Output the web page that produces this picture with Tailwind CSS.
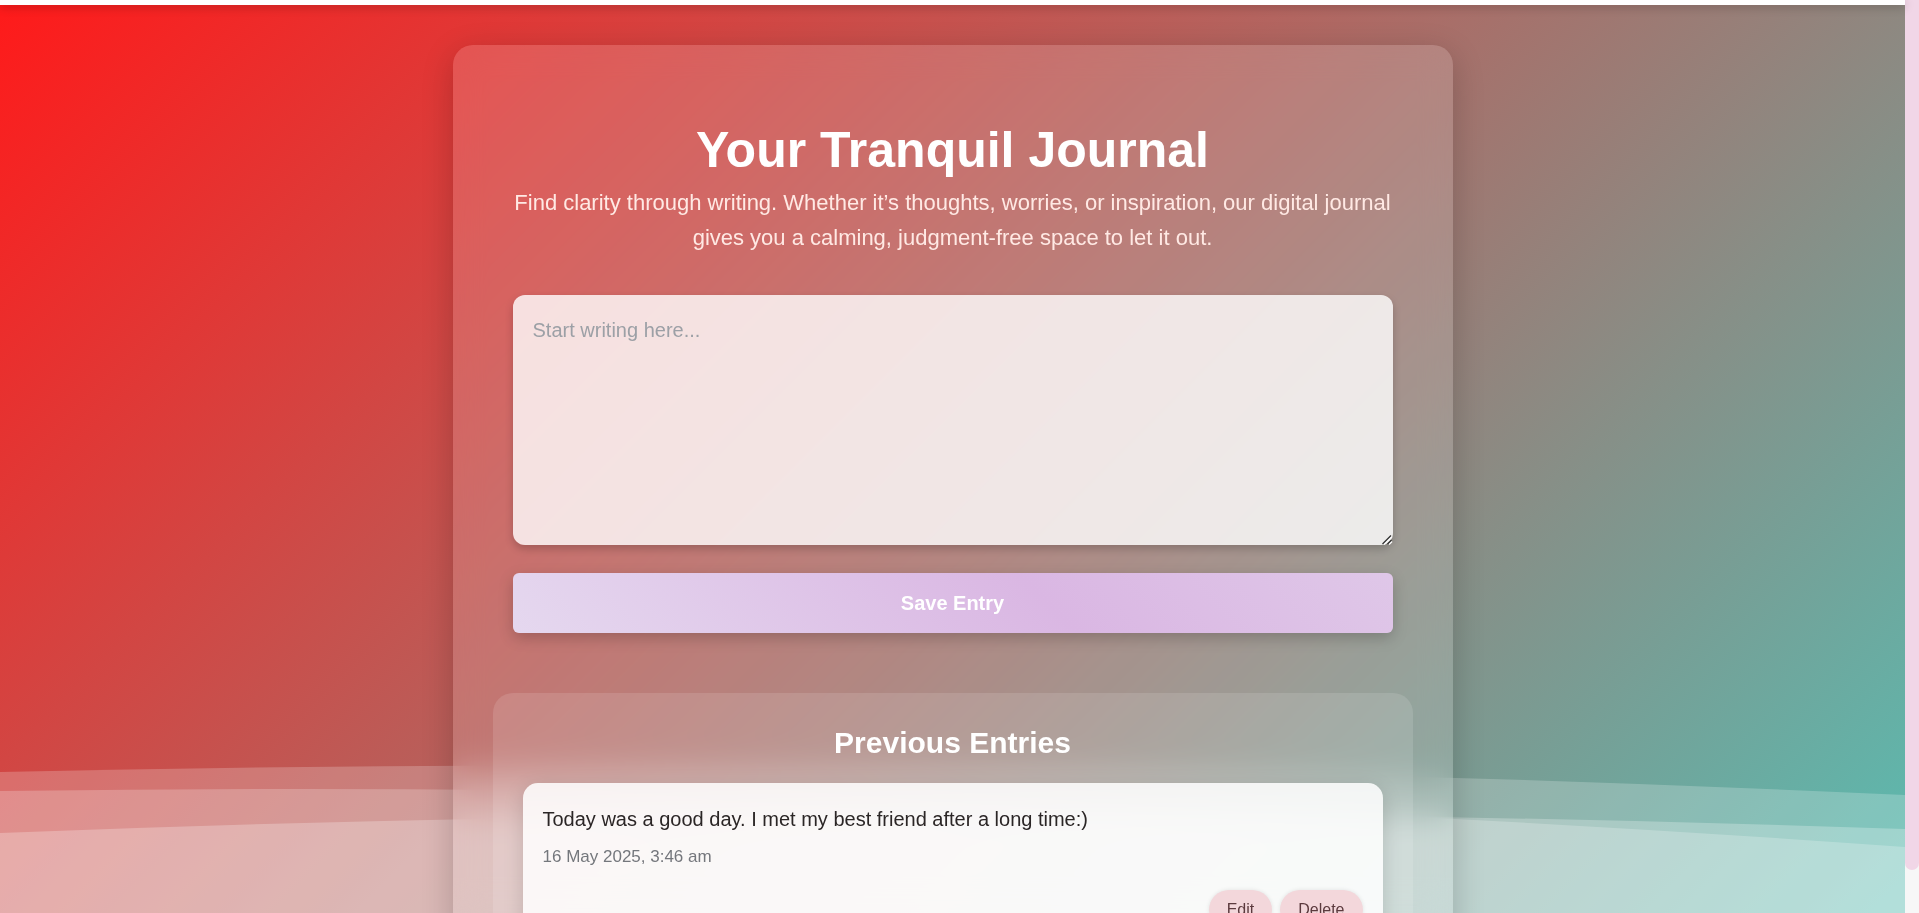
<!DOCTYPE html>
<html lang="en">
<head>
<meta charset="utf-8">
<meta name="viewport" content="width=device-width, initial-scale=1">
<title>Your Tranquil Journal</title>
<script src="https://cdn.jsdelivr.net/npm/@tailwindcss/browser@4"></script>
</head>
<body class="flex h-screen overflow-hidden bg-[#f5f5f5] font-['Liberation_Sans',Arial,sans-serif]">
  <div class="relative flex min-w-0 flex-1 flex-col bg-linear-135/srgb from-[#ff1a1a] to-[#59bcb1]">
    <!-- Layered waves along the bottom of the window -->
    <svg class="absolute inset-x-0 bottom-0 h-40 w-full" viewBox="0 0 1905 160" preserveAspectRatio="none" aria-hidden="true">
      <path d="M0 19Q952 -2 1905 42V160H0Z" fill="#fff" fill-opacity=".21"/>
      <path d="M0 38Q952 25 1905 94V160H0Z" fill="#fff" fill-opacity=".22"/>
      <path d="M0 80Q952 43 1905 76V160H0Z" fill="#fff" fill-opacity=".25"/>
    </svg>

    <header class="relative z-10 h-[5px] shrink-0 bg-white shadow-[0_2px_10px_rgba(0,0,0,0.25)]"></header>

    <main class="relative flex-1 overflow-y-auto px-5 py-10 [scrollbar-width:none]">
      <section class="mx-auto max-w-[1000px] rounded-[20px] bg-white/15 px-10 pt-20 pb-10 shadow-[0_8px_32px_rgba(0,0,0,0.2)] backdrop-blur-[15px]">
        <div class="px-5">
          <h1 class="mb-2.5 text-center text-[50px] leading-[50px] font-bold text-white">Your Tranquil Journal</h1>
          <p class="text-center text-[22px] leading-[35px] text-[#ffe9e4]">Find clarity through writing. Whether it’s thoughts, worries, or inspiration, our digital journal gives you a calming, judgment-free space to let it out.</p>
          <form class="mt-10">
            <label for="entry" class="sr-only">Journal entry</label>
            <div class="relative">
              <textarea id="entry" placeholder="Start writing here..." class="block h-[250px] w-full resize-none rounded-xl bg-white/80 p-5 text-xl leading-[30px] text-[#222] shadow-[0_4px_8px_rgba(0,0,0,0.2)] placeholder:text-[#9ca0a6]"></textarea>
              <svg class="pointer-events-none absolute right-0 bottom-0 size-3" viewBox="0 0 12 12" fill="none" aria-hidden="true">
                <path d="M3 11.5L11 3.5M8 11.5L11 8.5" stroke="#fff" stroke-width="1.5"/>
                <path d="M1.5 11L10 2.5M6.5 11L10.5 7" stroke="#333" stroke-width="1.3"/>
              </svg>
            </div>
            <button type="button" class="mt-7 h-15 w-full rounded-md bg-linear-45/srgb from-[#e5d8ef] via-[#dab7e3] via-60% to-[#dfc7e8] text-xl font-bold text-white shadow-[0_5px_15px_rgba(0,0,0,0.2)]">Save Entry</button>
          </form>
        </div>

        <section class="mt-15 rounded-[20px] bg-white/12 p-[30px]">
          <h2 class="mb-5 text-center text-3xl leading-10 font-bold text-white">Previous Entries</h2>
          <article class="rounded-[15px] bg-white/85 p-5 shadow-[0_5px_20px_rgba(0,0,0,0.15)]">
            <p class="text-xl leading-8 text-[#2b2626]">Today was a good day. I met my best friend after a long time:)</p>
            <time datetime="2025-05-16T03:46" class="mt-2 block text-[17px] leading-[27px] text-[#74777c]">16 May 2025, 3:46 am</time>
            <div class="mt-5 flex justify-end gap-2">
              <button type="button" class="h-10 rounded-full bg-[#f3d7db] px-[18px] text-base text-[#5c3a3e] shadow-[0_0_4px_rgba(0,0,0,0.1)]">Edit</button>
              <button type="button" class="h-10 rounded-full bg-[#f3d7db] px-[18px] text-base text-[#5c3a3e] shadow-[0_0_4px_rgba(0,0,0,0.1)]">Delete</button>
            </div>
          </article>
        </section>
      </section>
    </main>
  </div>

  <!-- Scroll track with its thumb -->
  <div class="w-3.5 shrink-0 bg-[#f7f7f7]" aria-hidden="true">
    <div class="h-[95.3%] rounded-b-full bg-[#f1d6e7]"></div>
  </div>
</body>
</html>
